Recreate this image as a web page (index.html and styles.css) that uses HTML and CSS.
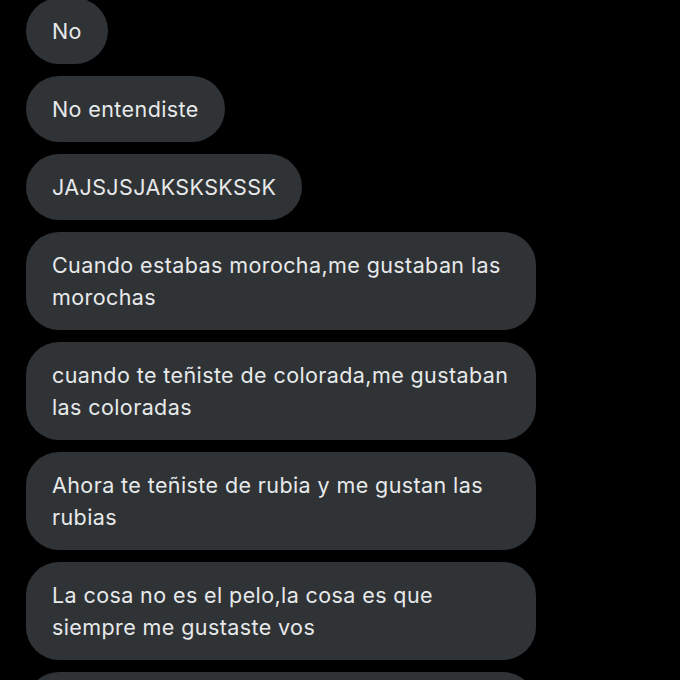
FILE: index.html
```html
<!DOCTYPE html>
<html lang="es">
<head>
<meta charset="utf-8">
<title>Mensajes</title>
<link rel="stylesheet" href="styles.css">
</head>
<body>
<main class="thread">
  <div class="bubble">No</div>
  <div class="bubble">No entendiste</div>
  <div class="bubble">JAJSJSJAKSKSKSSK</div>
  <div class="bubble">Cuando estabas morocha,me gustaban las morochas</div>
  <div class="bubble">cuando te teñiste de colorada,me gustaban las coloradas</div>
  <div class="bubble">Ahora te teñiste de rubia y me gustan las rubias</div>
  <div class="bubble">La cosa no es el pelo,la cosa es que siempre me gustaste vos</div>
  <div class="bubble bubble-empty" aria-hidden="true">&nbsp;</div>
</main>
</body>
</html>
```

FILE: styles.css
```css
html, body {
  margin: 0;
  padding: 0;
  background: #000;
  overflow: hidden;
  height: 680px;
}

.thread {
  display: flex;
  flex-direction: column;
  align-items: flex-start;
  gap: 12px;
  margin-top: -2px;
  padding-left: 26px;
}

.bubble {
  box-sizing: border-box;
  max-width: 510px;
  padding: 17px 26px;
  background: #2f3336;
  color: #e7e9ea;
  border-radius: 33px;
  font-family: "Inter", "Noto Sans", sans-serif;
  font-size: 21.5px;
  letter-spacing: 0.4px;
  line-height: 32px;
}

.bubble-empty {
  width: 510px;
}
```
